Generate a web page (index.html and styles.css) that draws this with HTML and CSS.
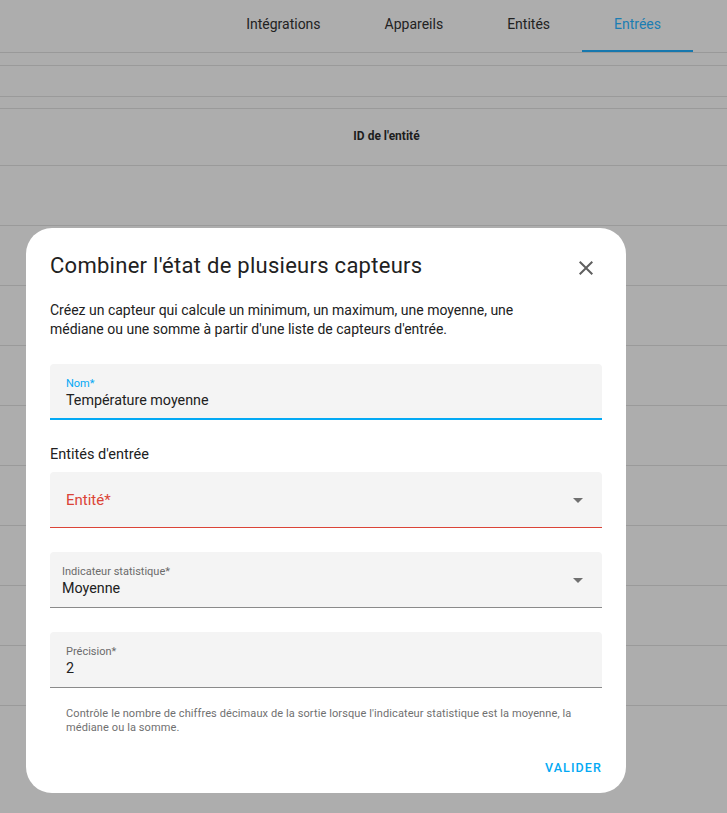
FILE: index.html
```html
<!DOCTYPE html>
<html lang="fr">
<head>
<meta charset="utf-8">
<title>Entrées</title>
<link rel="stylesheet" href="styles.css">
</head>
<body>
<div class="page">
  <nav class="tabs">
    <div class="tab">Intégrations</div>
    <div class="tab">Appareils</div>
    <div class="tab">Entités</div>
    <div class="tab active">Entrées</div>
  </nav>
  <div class="bar bar-a"></div>
  <div class="bar bar-b"></div>
  <div class="bar bar-c"></div>
  <div class="thead">ID de l'entité</div>
  <div class="row"></div>
  <div class="row"></div>
  <div class="row"></div>
  <div class="row"></div>
  <div class="row"></div>
  <div class="row"></div>
  <div class="row"></div>
  <div class="row"></div>
  <div class="row"></div>
</div>

<div class="dialog">
  <div class="dlg-head">
    <h2 class="dlg-title">Combiner l'état de plusieurs capteurs</h2>
    <button class="close" aria-label="Fermer">
      <svg viewBox="0 0 24 24" width="24" height="24"><path d="M19 6.41L17.59 5 12 10.59 6.41 5 5 6.41 10.59 12 5 17.59 6.41 19 12 13.41 17.59 19 19 17.59 13.41 12z"/></svg>
    </button>
  </div>
  <p class="desc">Créez un capteur qui calcule un minimum, un maximum, une moyenne, une<br>médiane ou une somme à partir d'une liste de capteurs d'entrée.</p>

  <div class="field focused first">
    <span class="flabel">Nom*</span>
    <span class="fvalue">Température moyenne</span>
  </div>

  <div class="section-label">Entités d'entrée</div>

  <div class="field error select">
    <span class="flabel-big">Entité*</span>
    <svg class="arrow" viewBox="0 0 24 24" width="24" height="24"><path d="M7 10l5 5 5-5z"/></svg>
  </div>

  <div class="field select narrow">
    <span class="flabel gray">Indicateur statistique*</span>
    <span class="fvalue">Moyenne</span>
    <svg class="arrow" viewBox="0 0 24 24" width="24" height="24"><path d="M7 10l5 5 5-5z"/></svg>
  </div>

  <div class="field">
    <span class="flabel gray">Précision*</span>
    <span class="fvalue">2</span>
  </div>
  <p class="helper">Contrôle le nombre de chiffres décimaux de la sortie lorsque l'indicateur statistique est la moyenne, la médiane ou la somme.</p>

  <div class="actions">
    <button class="btn">VALIDER</button>
  </div>
</div>
</body>
</html>
```

FILE: styles.css
```css
* { box-sizing: border-box; }
html, body { margin: 0; padding: 0; }
body {
  background: #adadad;
  font-family: Roboto, "Noto Sans", Arial, sans-serif;
  width: 727px;
  height: 813px;
  overflow: hidden;
  position: relative;
}
.page { display: flex; flex-direction: column; }
.tabs {
  height: 53px;
  display: flex;
  justify-content: flex-end;
  padding-right: 34px;
  border-bottom: 1px solid #999;
}
.tab {
  padding: 0 32px 2px;
  font-size: 14px;
  color: #222;
  display: flex;
  align-items: center;
  height: 52px;
  border-bottom: 2px solid transparent;
}
.tab.active { color: #1b7db3; border-bottom-color: #1778ae; }
.bar { border-bottom: 1px solid #9a9a9a; }
.bar-a { height: 13px; }
.bar-b { height: 31px; }
.bar-c { height: 12px; }
.thead {
  height: 57px;
  border-bottom: 1px solid #9a9a9a;
  display: flex;
  align-items: center;
  justify-content: center;
  font-size: 12px;
  font-weight: 700;
  color: #1d1d1d;
  padding-left: 46px;
  padding-bottom: 2px;
}
.row { height: 60px; border-bottom: 1px solid #9a9a9a; flex: none; }

.dialog {
  position: absolute;
  left: 26px;
  top: 228px;
  width: 600px;
  height: 565px;
  background: #fff;
  border-radius: 26px;
  padding: 24px 24px 8px 24px;
  display: flex;
  flex-direction: column;
}
.dlg-head { display: flex; align-items: center; justify-content: space-between; height: 28px; }
.dlg-title {
  margin: 0;
  font-size: 22px;
  font-weight: 400;
  color: #212121;
  line-height: 28px;
  letter-spacing: 0.27px;
}
.close {
  border: 0;
  background: none;
  width: 48px;
  height: 48px;
  margin-right: -8px;
  padding: 12px;
  display: flex;
  align-items: center;
  justify-content: center;
  fill: #5f5f5f;
  margin-top: 4px;
}
.desc {
  margin: 21px 0 0;
  font-size: 14px;
  line-height: 19px;
  color: #212121;
}
.field {
  margin-top: 24px;
  height: 56px;
  background: #f4f4f4;
  border-radius: 4px 4px 0 0;
  border-bottom: 1px solid #8a8a8a;
  padding: 13px 16px 0;
  display: flex;
  flex-direction: column;
  position: relative;
  flex: none;
}
.field.first { margin-top: 25px; }
.field.focused { border-bottom: 2px solid #03a9f4; }
.field.error { border-bottom-color: #db4437; margin-top: 7px; justify-content: center; padding-top: 0; }
.field.narrow { padding-left: 12px; }
.flabel { font-size: 11px; line-height: 14px; color: #03a9f4; }
.flabel.gray { color: #6b6b6b; }
.fvalue { font-size: 14.3px; line-height: 18px; color: #212121; margin-top: 0; }
.flabel-big { font-size: 15px; color: #db4437; }
.arrow { position: absolute; right: 12px; top: 16px; fill: #707070; }
.section-label {
  margin-top: 25px;
  font-size: 14.5px;
  line-height: 20px;
  color: #212121;
}
.helper {
  margin: 19px 0 0;
  padding: 0 16px;
  font-size: 11px;
  line-height: 14px;
  color: #707070;
  letter-spacing: 0.1px;
}
.actions { margin-top: auto; display: flex; justify-content: flex-end; }
.btn {
  border: 0;
  background: none;
  color: #03a9f4;
  font-family: Roboto, sans-serif;
  font-size: 12.5px;
  font-weight: 500;
  letter-spacing: 1.1px;
  height: 36px;
  padding: 0 8px;
  margin-right: -8px;
  margin-bottom: 0;
}
```
